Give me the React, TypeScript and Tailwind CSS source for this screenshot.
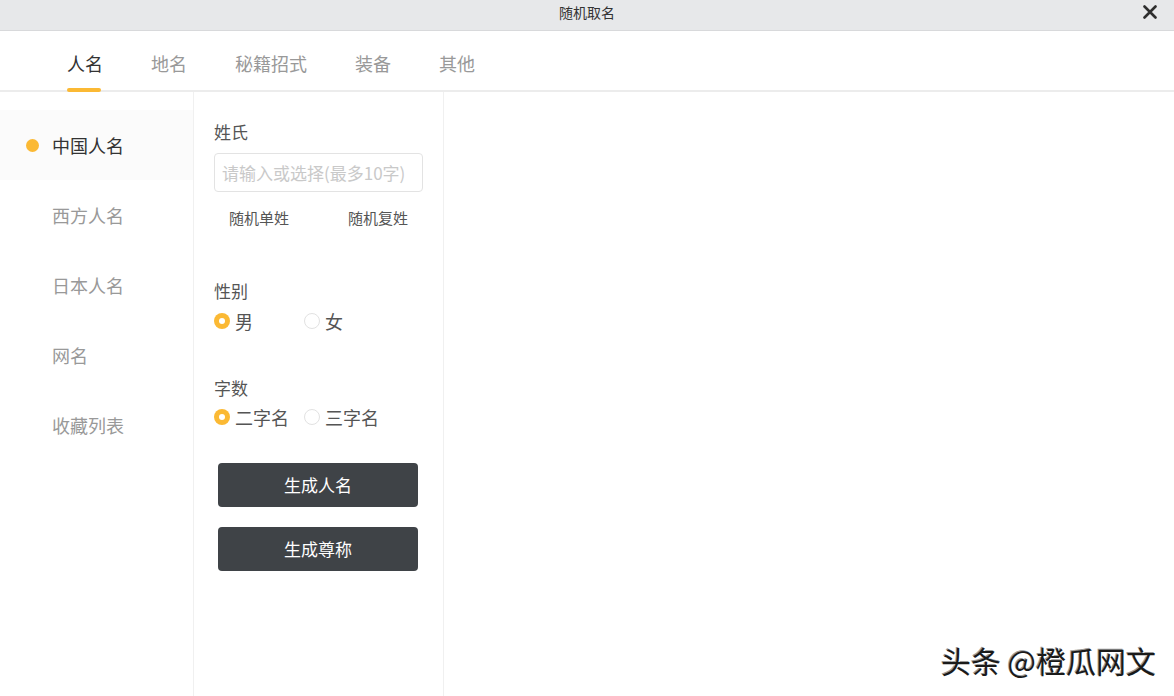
import React from "react";

function Radio({ checked, label }: { checked: boolean; label: string }) {
  return (
    <div className="flex items-center h-[24px]">
      {checked ? (
        <span className="w-[16px] h-[16px] rounded-full bg-[#fbb934] flex items-center justify-center">
          <span className="w-[6px] h-[6px] rounded-full bg-white" />
        </span>
      ) : (
        <span className="w-[16px] h-[16px] rounded-full border border-[#e2e2e2] bg-white" />
      )}
      <span className="ml-[5px] text-[18px] leading-[24px] text-[#555]">{label}</span>
    </div>
  );
}

export default function App() {
  const tabs = ["人名", "地名", "秘籍招式", "装备", "其他"];
  const side = ["中国人名", "西方人名", "日本人名", "网名", "收藏列表"];
  return (
    <div className="w-[1174px] h-[696px] bg-white relative overflow-hidden font-['Microsoft_YaHei','Noto_Sans_CJK_SC',sans-serif]">
      {/* title bar */}
      <div className="h-[31px] bg-[#e7e8ea] border-b border-[#d8d9db] flex items-center justify-center relative">
        <span className="text-[14px] text-[#333] leading-none -mt-[6px]">随机取名</span>
        <svg className="absolute right-[17px] top-[5px]" width="14" height="14" viewBox="0 0 14 14">
          <path d="M1.5 1.5 L12.5 12.5 M12.5 1.5 L1.5 12.5" stroke="#2e2e2e" strokeWidth="2.6" strokeLinecap="round" />
        </svg>
      </div>
      {/* tabs */}
      <div className="h-[61px] border-b-2 border-[#ececec] flex pl-[67px] gap-[48px]">
        {tabs.map((t, i) => (
          <div key={t} className="relative h-full flex items-center pt-[4px]">
            <span className={`text-[18px] leading-none ${i === 0 ? "text-[#333]" : "text-[#999]"}`}>{t}</span>
            {i === 0 && <span className="absolute left-0 right-[2px] bottom-[-2px] h-[4px] rounded-[2px] bg-[#fbb934]" />}
          </div>
        ))}
      </div>
      {/* body */}
      <div className="flex h-[604px]">
        <div className="w-[194px] border-r border-[#f0f0f0] pt-[18px]">
          {side.map((s, i) => (
            <div key={s} className={`relative h-[70px] flex items-center pl-[52px] ${i === 0 ? "bg-[#fbfbfb]" : ""}`}>
              {i === 0 && <span className="absolute left-[26px] top-[29px] w-[13px] h-[13px] rounded-full bg-[#fbb934]" />}
              <span className={`text-[18px] leading-none ${i === 0 ? "text-[#333]" : "text-[#999]"}`}>{s}</span>
            </div>
          ))}
        </div>
        <div className="w-[250px] border-r border-[#f0f0f0] px-[20px] pt-[28px] flex flex-col">
          <div className="text-[17px] leading-[24px] text-[#555]">姓氏</div>
          <div className="mt-[9px] w-[209px] h-[39px] border border-[#e3e3e3] rounded-[4px] flex items-center pl-[7px]">
            <span className="text-[17px] text-[#c9c9c9] whitespace-nowrap">请输入或选择(最多10字)</span>
          </div>
          <div className="mt-[14px] flex pl-[15px] gap-[59px] text-[15px] leading-[24px] text-[#555]">
            <span>随机单姓</span>
            <span>随机复姓</span>
          </div>
          <div className="mt-[49px] text-[17px] leading-[24px] text-[#555]">性别</div>
          <div className="mt-[6px] flex">
            <div className="w-[90px]"><Radio checked label="男" /></div>
            <Radio checked={false} label="女" />
          </div>
          <div className="mt-[43px] text-[17px] leading-[24px] text-[#555]">字数</div>
          <div className="mt-[5px] flex">
            <div className="w-[90px]"><Radio checked label="二字名" /></div>
            <Radio checked={false} label="三字名" />
          </div>
          <button className="mt-[34px] ml-[4px] w-[200px] h-[44px] rounded-[4px] bg-[#3f4347] text-white text-[17px]">生成人名</button>
          <button className="mt-[20px] ml-[4px] w-[200px] h-[44px] rounded-[4px] bg-[#3f4347] text-white text-[17px]">生成尊称</button>
        </div>
        <div className="flex-1" />
      </div>
      <div className="absolute right-[18px] top-[640px] text-[30px] leading-[40px] text-[#1a1a1a] whitespace-nowrap [text-shadow:1px_1px_0_#ffffff,-1px_-1px_0_#9a9a9a]">
        头条 @橙瓜网文
      </div>
    </div>
  );
}
